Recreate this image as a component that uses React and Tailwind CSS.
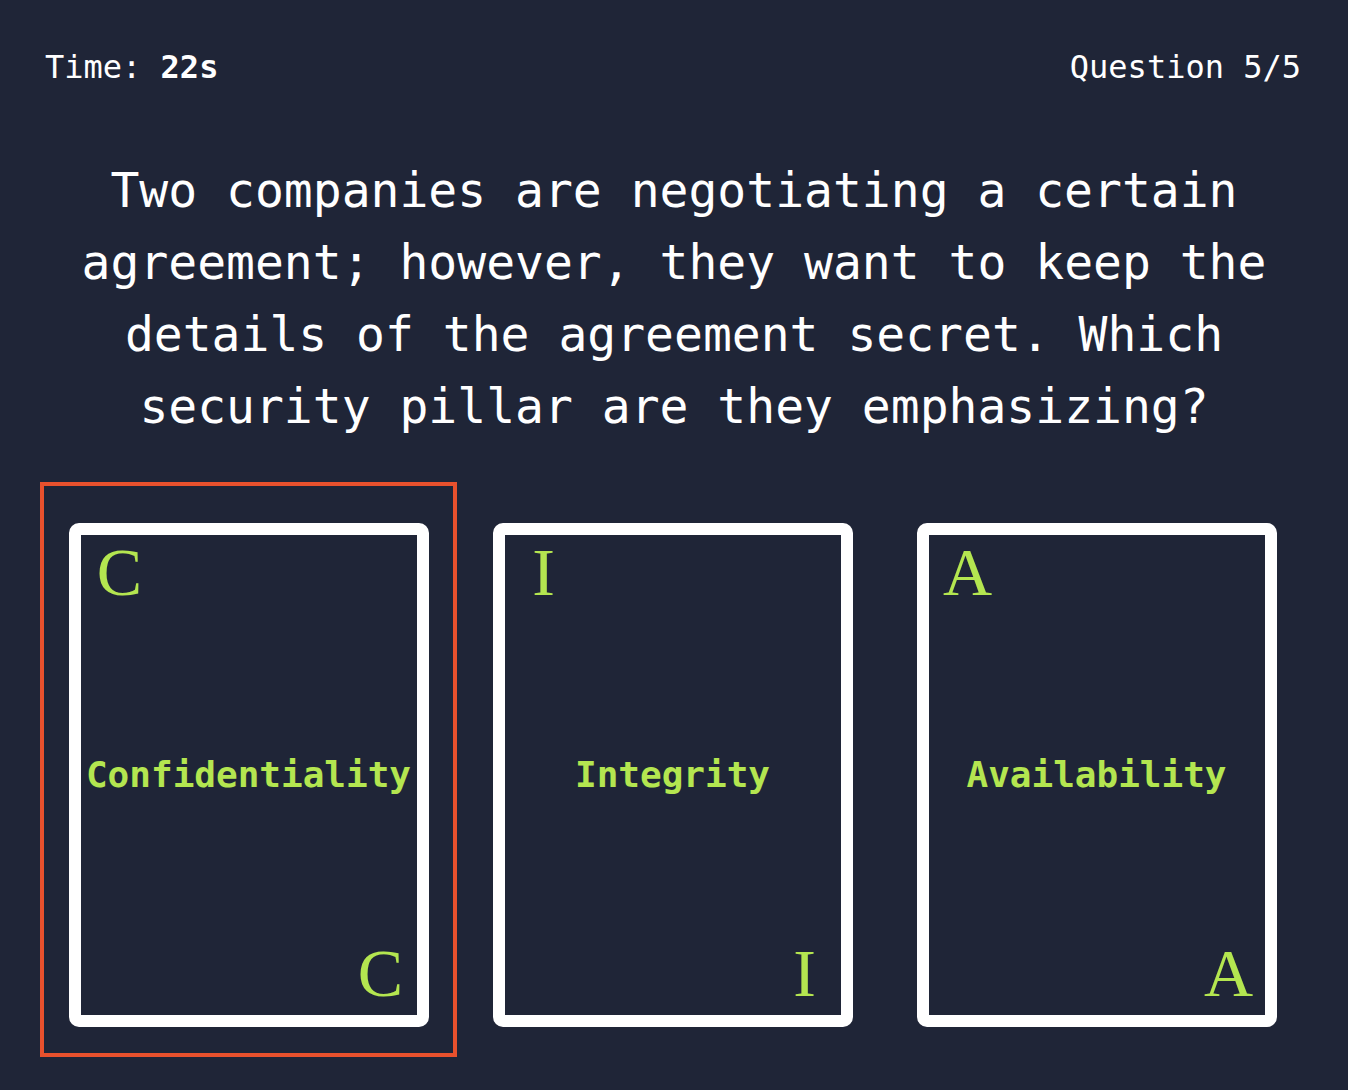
import React from "react";

const mono = { fontFamily: '"DejaVu Sans Mono", "Liberation Mono", monospace' };
const serif = { fontFamily: '"Liberation Serif", "Times New Roman", serif' };

function Card({ letter, label, selected }) {
  return (
    <div className="relative">
      {selected && (
        <div className="pointer-events-none absolute -left-[29px] -top-[41px] -right-[28px] -bottom-[30px] border-4 border-[#e8512d]" />
      )}
      <div className="flex h-[504px] w-[360px] flex-col rounded-[10px] border-[12px] border-white bg-[#1f2537]">
        <div className="ml-[7px] w-[64px] pt-[3px] text-center text-[68px] leading-none text-[#b4e650]" style={serif}>
          {letter}
        </div>
        <div className="flex flex-1 items-center justify-center pt-[4px]">
          <span className="whitespace-nowrap text-4xl font-bold text-[#b4e650]" style={mono}>
            {label}
          </span>
        </div>
        <div className="mr-[4px] w-[64px] self-end pb-[8px] text-center text-[68px] leading-none text-[#b4e650]" style={serif}>
          {letter}
        </div>
      </div>
    </div>
  );
}

export default function App() {
  return (
    <div className="min-h-[1090px] w-full bg-[#1f2537] text-white" style={mono}>
      <div className="flex justify-between px-[46px] pt-[47px] text-[32px] leading-[40px]">
        <div className="-ml-[1px]">
          Time: <span className="font-bold">22s</span>
        </div>
        <div className="mr-[1px]">Question 5/5</div>
      </div>
      <div className="mx-auto mt-[67px] max-w-[1270px] text-center text-[48px] leading-[72px]">
        Two companies are negotiating a certain agreement; however, they want to keep the details of the
        agreement secret. Which security pillar are they emphasizing?
      </div>
      <div className="mt-[81px] flex justify-center gap-[64px] pr-[3px]">
        <Card letter="C" label="Confidentiality" selected />
        <Card letter="I" label="Integrity" />
        <Card letter="A" label="Availability" />
      </div>
    </div>
  );
}
